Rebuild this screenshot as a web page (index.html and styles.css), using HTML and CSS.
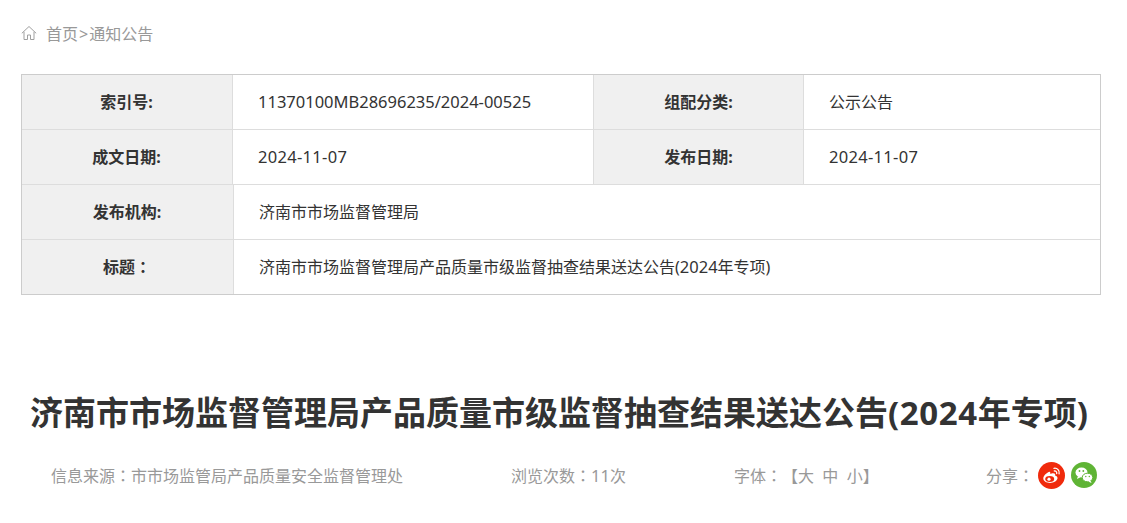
FILE: index.html
```html
<!DOCTYPE html>
<html lang="zh-CN">
<head>
<meta charset="utf-8">
<title>通知公告</title>
<link rel="stylesheet" href="styles.css">
</head>
<body>
<nav class="crumb">
  <svg class="home" width="16" height="16" viewBox="0 0 16 16" fill="none" stroke="#a0a0a0" stroke-width="1"><path d="M.8 8.300 8 1.500l7.200 6.800M3 6.800v7.700h3.500v-4.500h3v4.500H13V6.800"/></svg>
  <span class="crumb-text">首页<span class="gt">&gt;</span>通知公告</span>
</nav>
<section class="meta">
  <div class="row">
    <div class="label l1"><span>索引号:</span></div>
    <div class="value v1"><span class="code">11370100MB28696235/2024-00525</span></div>
    <div class="label l2"><span>组配分类:</span></div>
    <div class="value v2"><span>公示公告</span></div>
  </div>
  <div class="row">
    <div class="label l1"><span>成文日期:</span></div>
    <div class="value v1"><span class="date">2024-11-07</span></div>
    <div class="label l2"><span>发布日期:</span></div>
    <div class="value v2"><span class="date">2024-11-07</span></div>
  </div>
  <div class="row">
    <div class="label l3"><span>发布机构:</span></div>
    <div class="value v3"><span>济南市市场监督管理局</span></div>
  </div>
  <div class="row last">
    <div class="label l3"><span>标题<span class="colon" lang="zh-Hant">：</span></span></div>
    <div class="value v3"><span>济南市市场监督管理局产品质量市级监督抽查结果送达公告(<span class="num">2024</span>年专项)</span></div>
  </div>
</section>
<h1 class="title">济南市市场监督管理局产品质量市级监督抽查结果送达公告<span class="title-num">(2024</span>年专项)</h1>
<div class="info">
  <span class="source">信息来源<span class="colon" lang="zh-Hant">：</span>市市场监管局产品质量安全监督管理处</span>
  <span class="views">浏览次数<span class="colon" lang="zh-Hant">：</span><span class="num">11</span>次</span>
  <span class="size">字体<span class="colon" lang="zh-Hant">：</span>【大&nbsp;&nbsp;中&nbsp;&nbsp;小】</span>
  <span class="share">
    <span class="share-label">分享<span class="colon" lang="zh-Hant">：</span></span>
    <svg class="ico" width="27" height="27" viewBox="0 0 27 27"><circle cx="13.500" cy="13.500" r="13.500" fill="#f02a0c"/><path d="M11.300 9.800c-3 1.200-6 4-6 6.800 0 2.600 3.200 4.400 6.700 4.400 4 0 7.500-2.300 7.500-4.900 0-1.600-1.400-2.200-2.500-2.500.6-1.400.2-2.400-1.800-2.400-1 0-2.200.4-2.900.8.300-1.500-.3-2.500-1-2.200z" fill="#fff"/><ellipse cx="11.700" cy="17" rx="4.500" ry="3" fill="#f02a0c"/><circle cx="11" cy="17.200" r="1.600" fill="#fff"/><path d="M16 6.300c3.200-.6 6 2.300 5.100 5.500M16.300 9c1.600-.3 2.800 1.100 2.400 2.600" fill="none" stroke="#fff" stroke-width="1.300" stroke-linecap="round"/></svg>
    <svg class="ico wx" width="26" height="26" viewBox="0 0 26 26"><circle cx="13" cy="13" r="13" fill="#5fb435"/><ellipse cx="10.500" cy="10.500" rx="6" ry="5" fill="#fff"/><path d="M7 14l-1 3 3.500-1.800z" fill="#fff"/><ellipse cx="16.500" cy="15.500" rx="5.300" ry="4.300" fill="#fff" stroke="#5fb435" stroke-width="1"/><path d="M19.500 18.500l1 2.500-3.300-1.500z" fill="#fff"/><circle cx="8.500" cy="9" r=".9" fill="#5fb435"/><circle cx="12.300" cy="9" r=".9" fill="#5fb435"/><circle cx="14.800" cy="14.500" r=".7" fill="#5fb435"/><circle cx="18.300" cy="14.500" r=".7" fill="#5fb435"/></svg>
  </span>
</div>
</body>
</html>
```
FILE: styles.css
```css
* { box-sizing: border-box; }
html, body { margin: 0; padding: 0; background: #fff; overflow: hidden; }
body {
  height: 523px;
  font-family: "Noto Sans", "Noto Sans CJK SC", sans-serif;
  color: #333;
  font-size: 16px;
  text-spacing-trim: space-all;
}
.crumb {
  display: flex;
  align-items: center;
  height: 20px;
  margin: 23px 0 0 21px;
  color: #999;
}
.home { margin-right: 9px; }
.crumb-text { font-size: 16px; }
.gt { margin: 0 1px; }
.colon { font-family: "Noto Sans CJK TC", sans-serif; }
.num { font-size: 16.500px; }
.code { font-size: 16.500px; }
.date { font-size: 16.500px; letter-spacing: .3px; }
.meta {
  margin: 31px 26px 0 21px;
  border: 1px solid #ccc;
}
.row {
  display: flex;
  height: 55px;
  border-bottom: 1px solid #ddd;
}
.row.last { height: 54px; border-bottom: 0; }
.label {
  display: flex;
  align-items: center;
  justify-content: center;
  padding: 0 1px 2px 0;
  background: #f0f0f0;
  font-weight: 700;
  font-size: 16px;
  color: #333;
}
.l1 { width: 210px; }
.l2 { width: 211px; padding-right: 0; border-left: 1px solid #ddd; border-right: 1px solid #ddd; }
.l3 { width: 211px; }
.value {
  display: flex;
  align-items: center;
  padding-left: 25px;
  padding-bottom: 2px;
  border-left: 1px solid #ddd;
}
.v1 { width: 361px; }
.l2 + .v2 { border-left: 0; flex: 1; }
.v3 { flex: 1; }
.title {
  margin: 96px 0 0;
  padding-right: 9px;
  text-align: center;
  font-size: 33px;
  line-height: 44px;
  font-weight: 700;
  color: #333;
  white-space: nowrap;
}
.title-num { letter-spacing: .6px; }
.info {
  display: flex;
  align-items: center;
  height: 30px;
  margin: 25px 0 0 51px;
  color: #999;
}
.source { flex: none; width: 460px; }
.views { flex: none; width: 223px; }
.size { flex: none; width: 252px; }
.share { flex: none; display: flex; align-items: center; white-space: nowrap; }
.share-label { margin-right: 4px; }
.ico { flex: none; }
.wx { margin-left: 6px; }
```
